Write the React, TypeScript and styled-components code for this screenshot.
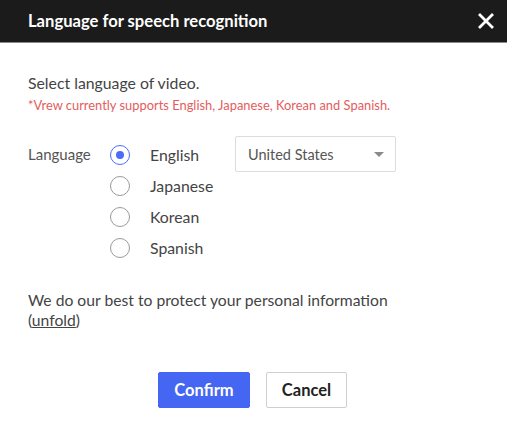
import styled, { createGlobalStyle } from "styled-components";

const GlobalStyle = createGlobalStyle`
  body {
    margin: 0;
    background: #ffffff;
    font-family: Lato, "Noto Sans", sans-serif;
  }
`;

const Dialog = styled.div`
  width: 507px;
  height: 437px;
  background: #fff;
  display: flex;
  flex-direction: column;
`;

const Header = styled.div`
  height: 42px;
  background: #1b1b1b;
  border-bottom: 1px solid #8a8a8a;
  display: flex;
  align-items: center;
  justify-content: space-between;
  padding: 0 9px 0 28px;
`;

const Title = styled.h1`
  margin: 0;
  color: #fff;
  font-size: 16.6px;
  font-weight: 700;
`;

const CloseButton = styled.button`
  border: none;
  background: transparent;
  padding: 0;
  width: 24px;
  height: 24px;
  display: flex;
  align-items: center;
  justify-content: center;
  cursor: pointer;
`;

const Body = styled.div`
  padding: 29px 28px 0;
  display: flex;
  flex-direction: column;
`;

const Lead = styled.p`
  margin: 0;
  font-size: 15.8px;
  line-height: 22px;
  color: #444;
`;

const Note = styled.p`
  margin: 2px 0 0;
  font-size: 12.9px;
  line-height: 18px;
  color: #e35d5d;
`;

const LangRow = styled.div`
  display: flex;
  align-items: flex-start;
  margin-top: 25px;
`;

const Label = styled.span`
  width: 82px;
  font-size: 15px;
  line-height: 31px;
  color: #555;
`;

const Options = styled.div`
  display: flex;
  flex-direction: column;
  width: 125px;
`;

const Option = styled.label`
  display: flex;
  align-items: center;
  height: 31px;
  font-size: 15.8px;
  color: #444;
  cursor: pointer;
`;

const Radio = styled.span<{ $checked?: boolean }>`
  box-sizing: border-box;
  width: 20px;
  height: 20px;
  border-radius: 50%;
  border: 1.5px solid ${({ $checked }) => ($checked ? "#4a6cf7" : "#9a9a9a")};
  display: flex;
  align-items: center;
  justify-content: center;
  margin-right: 20px;

  &::after {
    content: "";
    width: 8px;
    height: 8px;
    border-radius: 50%;
    background: #4a6cf7;
    display: ${({ $checked }) => ($checked ? "block" : "none")};
  }
`;

const Select = styled.div`
  box-sizing: border-box;
  width: 161px;
  height: 36px;
  margin-top: -3px;
  border: 1px solid #dcdcdc;
  border-radius: 2px;
  display: flex;
  align-items: center;
  justify-content: space-between;
  padding: 0 11px 0 12px;
  font-size: 14.5px;
  color: #555;
`;

const Caret = styled.span`
  width: 0;
  height: 0;
  border-left: 5px solid transparent;
  border-right: 5px solid transparent;
  border-top: 5px solid #8a8a8a;
`;

const Privacy = styled.p`
  margin: 27px 0 0;
  font-size: 15.7px;
  line-height: 20px;
  color: #444;
`;

const Unfold = styled.span`
  text-decoration: underline;
  cursor: pointer;
`;

const Actions = styled.div`
  display: flex;
  justify-content: center;
  gap: 16px;
  margin-top: 42px;
  padding-right: 2px;
`;

const Button = styled.button<{ $primary?: boolean }>`
  box-sizing: border-box;
  height: 36px;
  padding: 0;
  width: ${({ $primary }) => ($primary ? "92px" : "81px")};
  border-radius: 2px;
  font-family: inherit;
  font-size: 16.5px;
  font-weight: 700;
  cursor: pointer;
  border: 1px solid ${({ $primary }) => ($primary ? "#4466f2" : "#cfcfcf")};
  background: ${({ $primary }) => ($primary ? "#4466f2" : "#fff")};
  color: ${({ $primary }) => ($primary ? "#fff" : "#222")};
`;

const languages = ["English", "Japanese", "Korean", "Spanish"];

export default function App() {
  return (
    <>
      <GlobalStyle />
      <Dialog>
        <Header>
          <Title>Language for speech recognition</Title>
          <CloseButton aria-label="close">
            <svg width="16" height="16" viewBox="0 0 16 16">
              <path d="M2 2 L14 14 M14 2 L2 14" stroke="#fff" strokeWidth="2.8" strokeLinecap="square" />
            </svg>
          </CloseButton>
        </Header>
        <Body>
          <Lead>Select language of video.</Lead>
          <Note>*Vrew currently supports English, Japanese, Korean and Spanish.</Note>
          <LangRow>
            <Label>Language</Label>
            <Options>
              {languages.map((lang, i) => (
                <Option key={lang}>
                  <Radio $checked={i === 0} />
                  {lang}
                </Option>
              ))}
            </Options>
            <Select>
              United States
              <Caret />
            </Select>
          </LangRow>
          <Privacy>
            We do our best to protect your personal information
            <br />(<Unfold>unfold</Unfold>)
          </Privacy>
          <Actions>
            <Button $primary>Confirm</Button>
            <Button>Cancel</Button>
          </Actions>
        </Body>
      </Dialog>
    </>
  );
}
